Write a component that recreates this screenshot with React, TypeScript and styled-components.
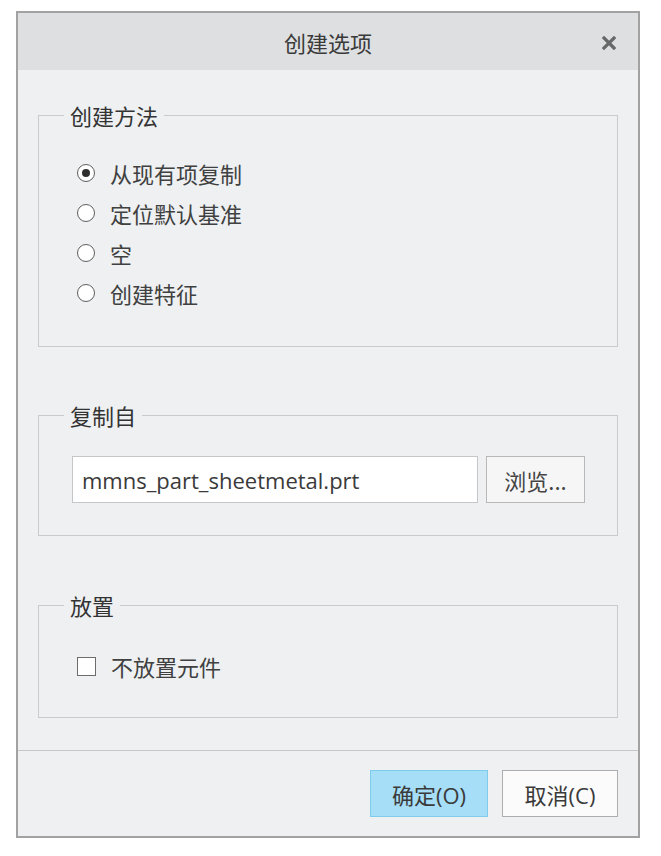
import React from "react";
import styled, { createGlobalStyle } from "styled-components";

const Global = createGlobalStyle`
  html, body { margin: 0; padding: 0; background: #ffffff; }
  body {
    font-family: "Noto Sans", "Noto Sans CJK SC", sans-serif;
    color: #363636;
  }
  * { box-sizing: border-box; }
`;

const Page = styled.div`
  padding: 11px 21px 18px 16px;
`;

const Dialog = styled.div`
  width: 624px;
  height: 827px;
  border: 2px solid #a2a2a2;
  background: #eef0f2;
  display: flex;
  flex-direction: column;
`;

const TitleBar = styled.div`
  height: 57px;
  flex: none;
  background: #dddfe1;
  display: grid;
  grid-template-columns: 60px 1fr 60px;
  align-items: center;
`;

const Title = styled.div`
  grid-column: 2;
  text-align: center;
  font-family: "Noto Sans CJK SC", sans-serif;
  font-size: 22px;
  color: #3a3a3a;
  padding-top: 1px;
`;

const CloseButton = styled.div`
  grid-column: 3;
  display: flex;
  justify-content: flex-end;
  padding-right: 22px;
  padding-top: 2px;
`;

const Content = styled.div`
  padding: 30px 20px 0 20px;
  display: flex;
  flex-direction: column;
`;

const Group = styled.fieldset<{ $pad: number; $gap: number; $mt: number }>`
  margin: ${(p) => p.$mt}px 0 0 0;
  border: 1px solid #c9cacc;
  padding: ${(p) => p.$gap}px 0 ${(p) => p.$pad}px 0;
  min-width: 0;
`;

const Legend = styled.legend`
  margin-left: 25px;
  padding: 0 6px;
  font-family: "Noto Sans CJK SC", sans-serif;
  font-size: 22px;
  line-height: 30px;
  color: #333;
`;

const OptionRow = styled.label`
  height: 40px;
  display: flex;
  align-items: center;
  padding-left: 38px;
  gap: 15px;
  font-family: "Noto Sans CJK SC", sans-serif;
  font-size: 22px;
  color: #404040;
`;

const Radio = styled.span<{ $checked?: boolean }>`
  width: 18px;
  height: 18px;
  border-radius: 50%;
  border: 1.5px solid #5e5e5e;
  background: #ffffff;
  display: flex;
  align-items: center;
  justify-content: center;
  flex: none;
  &::after {
    content: "";
    width: 8px;
    height: 8px;
    border-radius: 50%;
    background: ${(p) => (p.$checked ? "#2e2e2e" : "transparent")};
  }
`;

const Checkbox = styled.span`
  width: 19px;
  height: 19px;
  border: 1.5px solid #6c6c6c;
  background: #ffffff;
  flex: none;
`;

const FileRow = styled.div`
  display: flex;
  gap: 8px;
  padding-left: 33px;
`;

const FileInput = styled.div`
  width: 406px;
  height: 47px;
  background: #ffffff;
  border: 1px solid #c5c6c8;
  display: flex;
  align-items: center;
  padding-left: 9px;
  font-family: "Open Sans", "Noto Sans CJK SC", sans-serif;
  font-size: 22px;
  color: #3a3a3a;
`;

const SmallButton = styled.div`
  width: 99px;
  height: 47px;
  background: #f6f6f7;
  border: 1px solid #b8b8b8;
  display: flex;
  align-items: center;
  justify-content: center;
  font-family: "Noto Sans CJK SC", sans-serif;
  font-size: 22px;
  color: #444;
`;

const Separator = styled.div`
  height: 1px;
  background: #c6c7c9;
  margin-top: 32px;
`;

const Footer = styled.div`
  display: flex;
  justify-content: flex-end;
  gap: 14px;
  padding: 19px 20px 0 0;
`;

const DialogButton = styled.div<{ $primary?: boolean }>`
  height: 47px;
  width: ${(p) => (p.$primary ? 118 : 116)}px;
  background: ${(p) => (p.$primary ? "#a6def7" : "#fbfbfb")};
  border: 1px solid ${(p) => (p.$primary ? "#7fcbeb" : "#adadad")};
  display: flex;
  align-items: center;
  justify-content: center;
  font-family: "Open Sans", "Noto Sans CJK SC", sans-serif;
  font-size: 22px;
  color: #3a3a3a;
`;

const CloseIcon = () => (
  <svg width="14" height="14" viewBox="0 0 14 14">
    <path d="M2 2 L12 12 M12 2 L2 12" stroke="#676767" strokeWidth="3.2" strokeLinecap="square" />
  </svg>
);

const methods = ["从现有项复制", "定位默认基准", "空", "创建特征"];

export default function App() {
  return (
    <>
      <Global />
      <Page>
        <Dialog>
          <TitleBar>
            <Title>创建选项</Title>
            <CloseButton>
              <CloseIcon />
            </CloseButton>
          </TitleBar>
          <Content>
            <Group $mt={0} $gap={23} $pad={33}>
              <Legend>创建方法</Legend>
              {methods.map((m, i) => (
                <OptionRow key={m}>
                  <Radio $checked={i === 0} />
                  {m}
                </OptionRow>
              ))}
            </Group>
            <Group $mt={53} $gap={26} $pad={32}>
              <Legend>复制自</Legend>
              <FileRow>
                <FileInput>mmns_part_sheetmetal.prt</FileInput>
                <SmallButton>浏览...</SmallButton>
              </FileRow>
            </Group>
            <Group $mt={54} $gap={26} $pad={31}>
              <Legend>放置</Legend>
              <OptionRow>
                <Checkbox />
                不放置元件
              </OptionRow>
            </Group>
          </Content>
          <Separator />
          <Footer>
            <DialogButton $primary>确定(O)</DialogButton>
            <DialogButton>取消(C)</DialogButton>
          </Footer>
        </Dialog>
      </Page>
    </>
  );
}
